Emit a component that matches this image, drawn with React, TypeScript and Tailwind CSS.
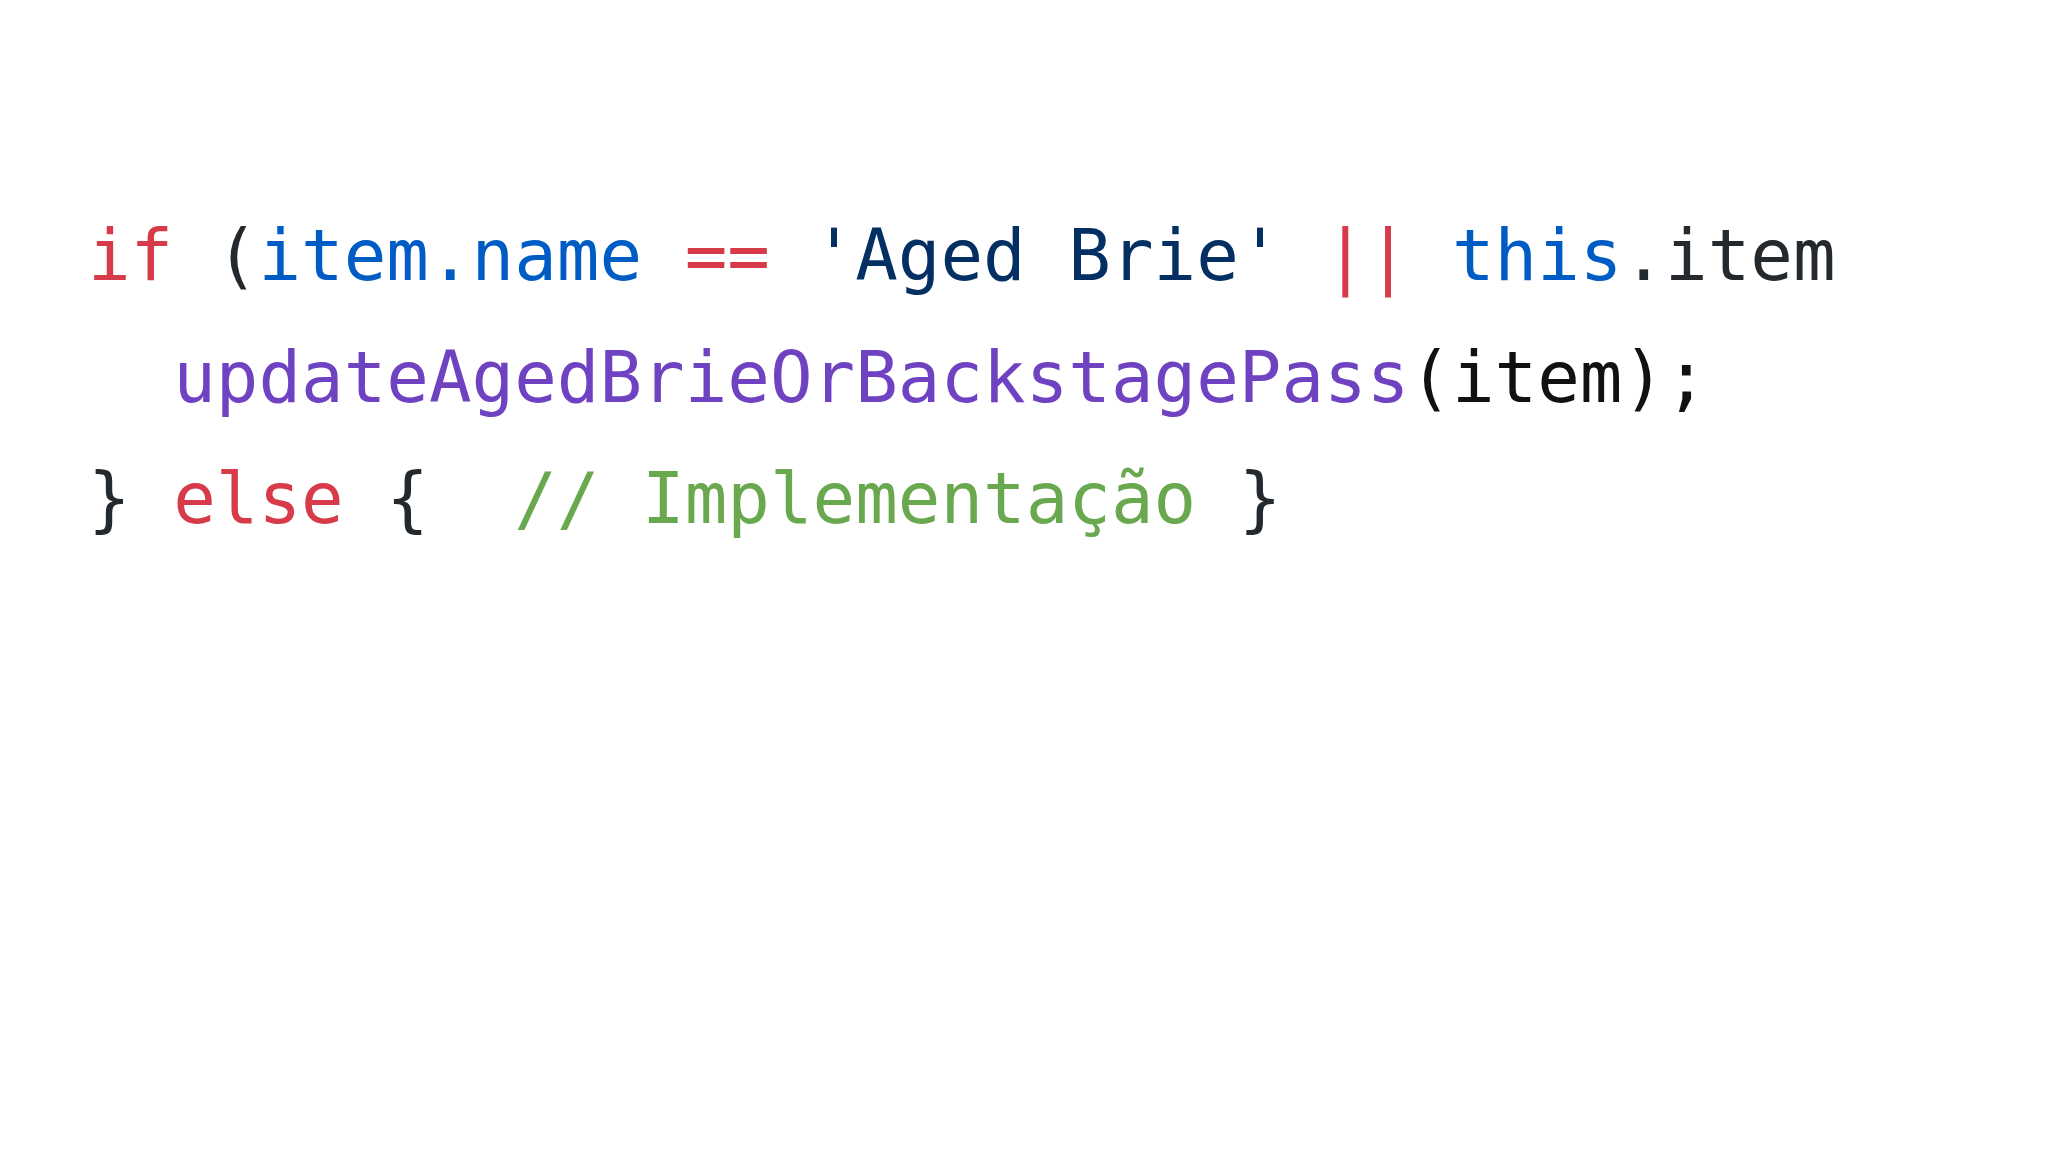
import React from "react";

type Token = { text: string; color: string };

const lines: Token[][] = [
    [
        { text: "if", color: "text-[#d73a49]" },
        { text: " (", color: "text-[#24292e]" },
        { text: "item.name", color: "text-[#005cc5]" },
        { text: " ", color: "text-[#24292e]" },
        { text: "==", color: "text-[#d73a49]" },
        { text: " ", color: "text-[#24292e]" },
        { text: "'Aged Brie'", color: "text-[#032f62]" },
        { text: " ", color: "text-[#24292e]" },
        { text: "||", color: "text-[#d73a49]" },
        { text: " ", color: "text-[#24292e]" },
        { text: "this", color: "text-[#005cc5]" },
        { text: ".item", color: "text-[#24292e]" },
    ],
    [
        { text: "  ", color: "text-[#24292e]" },
        { text: "updateAgedBrieOrBackstagePass", color: "text-[#6f42c1]" },
        { text: "(item);", color: "text-[#111111]" },
    ],
    [
        { text: "} ", color: "text-[#24292e]" },
        { text: "else", color: "text-[#d73a49]" },
        { text: " {  ", color: "text-[#24292e]" },
        { text: "// Implementação", color: "text-[#6aa84f]" },
        { text: " }", color: "text-[#24292e]" },
    ],
];

export default function App() {
    return (
        <div className="w-[2048px] h-[1152px] bg-white overflow-hidden">
            <div className="pl-[88px] pt-[195px] font-['DejaVu_Sans_Mono',monospace] text-[70.8px] leading-[121.5px] whitespace-pre">
                {lines.map((line, i) => (
                    <div key={i}>
                        {line.map((token, j) => (
                            <span key={j} className={token.color}>{token.text}</span>
                        ))}
                    </div>
                ))}
            </div>
        </div>
    );
}
